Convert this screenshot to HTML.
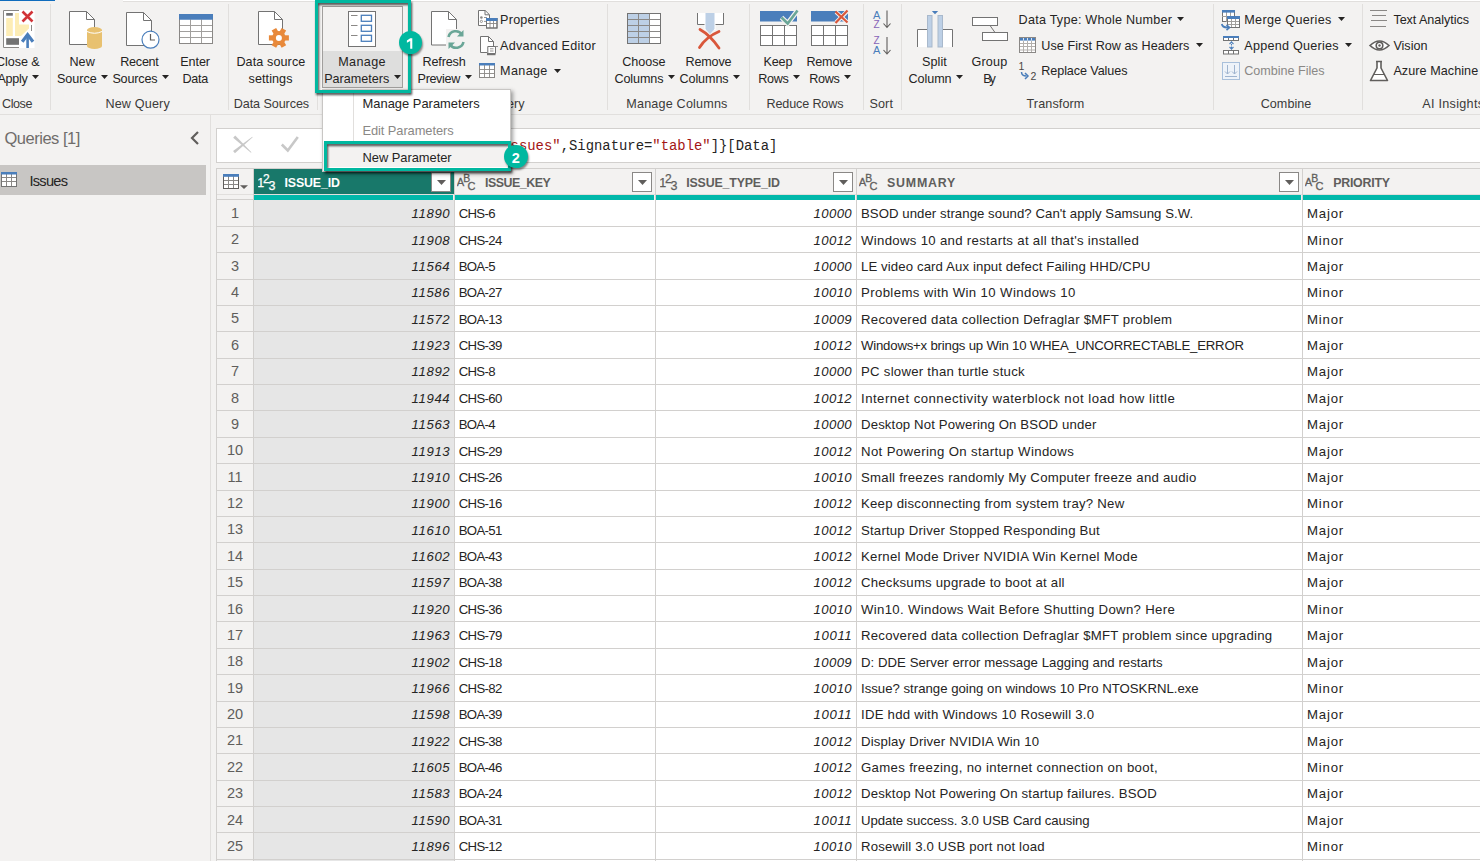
<!DOCTYPE html>
<html><head><meta charset="utf-8"><style>
html,body{margin:0;padding:0;}
body{width:1480px;height:861px;overflow:hidden;position:relative;background:#f3f2f1;font-family:"Liberation Sans",sans-serif;}
.t{position:absolute;white-space:nowrap;line-height:1;}
.r{position:absolute;}
</style></head><body>
<div class="r" style="left:0px;top:0px;width:55px;height:1px;background:#0f6cbd;"></div>
<div class="r" style="left:123px;top:0px;width:1357px;height:1px;background:#ffffff;"></div>
<div class="r" style="left:123px;top:1px;width:1357px;height:1px;background:#e1dfdd;"></div>
<div class="r" style="left:0px;top:114px;width:1480px;height:1px;background:#e1dfdd;"></div>
<div class="r" style="left:50px;top:4px;width:1px;height:106px;background:#e1dfdd;"></div>
<div class="r" style="left:228px;top:4px;width:1px;height:106px;background:#e1dfdd;"></div>
<div class="r" style="left:317px;top:4px;width:1px;height:106px;background:#e1dfdd;"></div>
<div class="r" style="left:607px;top:4px;width:1px;height:106px;background:#e1dfdd;"></div>
<div class="r" style="left:749px;top:4px;width:1px;height:106px;background:#e1dfdd;"></div>
<div class="r" style="left:863px;top:4px;width:1px;height:106px;background:#e1dfdd;"></div>
<div class="r" style="left:901px;top:4px;width:1px;height:106px;background:#e1dfdd;"></div>
<div class="r" style="left:1213px;top:4px;width:1px;height:106px;background:#e1dfdd;"></div>
<div class="r" style="left:1362px;top:4px;width:1px;height:106px;background:#e1dfdd;"></div>
<div class="r" style="left:322px;top:6px;width:81px;height:82px;background:#f3f2f1;border:1px solid #a19f9d;box-sizing:border-box;"></div>
<div class="r" style="left:323px;top:51px;width:79px;height:36px;background:#dededd;"></div>
<div class="t" style="left:-4.00px;top:55.73px;font-size:12.6px;color:#252423;font-weight:normal;font-style:normal;font-family:'Liberation Sans', sans-serif;letter-spacing:-0.067px;">Close &amp;</div>
<div class="t" style="left:-2.50px;top:72.73px;font-size:12.6px;color:#252423;font-weight:normal;font-style:normal;font-family:'Liberation Sans', sans-serif;letter-spacing:-0.275px;">Apply</div>
<svg class="r" style="left:32px;top:75px;" width="7" height="4" viewBox="0 0 7 4"><path d="M0 0H7L3.5 4Z" fill="#252423"/></svg>
<div class="t" style="left:69.40px;top:55.73px;font-size:12.6px;color:#252423;font-weight:normal;font-style:normal;font-family:'Liberation Sans', sans-serif;letter-spacing:0.119px;">New</div>
<div class="t" style="left:57.00px;top:72.73px;font-size:12.6px;color:#252423;font-weight:normal;font-style:normal;font-family:'Liberation Sans', sans-serif;letter-spacing:-0.028px;">Source</div>
<svg class="r" style="left:101px;top:75px;" width="7" height="4" viewBox="0 0 7 4"><path d="M0 0H7L3.5 4Z" fill="#252423"/></svg>
<div class="t" style="left:120.30px;top:55.73px;font-size:12.6px;color:#252423;font-weight:normal;font-style:normal;font-family:'Liberation Sans', sans-serif;letter-spacing:-0.268px;">Recent</div>
<div class="t" style="left:112.40px;top:72.73px;font-size:12.6px;color:#252423;font-weight:normal;font-style:normal;font-family:'Liberation Sans', sans-serif;letter-spacing:-0.174px;">Sources</div>
<svg class="r" style="left:162px;top:75px;" width="7" height="4" viewBox="0 0 7 4"><path d="M0 0H7L3.5 4Z" fill="#252423"/></svg>
<div class="t" style="left:180.30px;top:55.73px;font-size:12.6px;color:#252423;font-weight:normal;font-style:normal;font-family:'Liberation Sans', sans-serif;letter-spacing:-0.104px;">Enter</div>
<div class="t" style="left:182.40px;top:72.73px;font-size:12.6px;color:#252423;font-weight:normal;font-style:normal;font-family:'Liberation Sans', sans-serif;letter-spacing:-0.216px;">Data</div>
<div class="t" style="left:236.40px;top:55.73px;font-size:12.6px;color:#252423;font-weight:normal;font-style:normal;font-family:'Liberation Sans', sans-serif;letter-spacing:0.099px;">Data source</div>
<div class="t" style="left:248.60px;top:72.73px;font-size:12.6px;color:#252423;font-weight:normal;font-style:normal;font-family:'Liberation Sans', sans-serif;letter-spacing:0.070px;">settings</div>
<div class="t" style="left:338.20px;top:55.73px;font-size:12.6px;color:#252423;font-weight:normal;font-style:normal;font-family:'Liberation Sans', sans-serif;letter-spacing:0.370px;">Manage</div>
<div class="t" style="left:324.20px;top:72.73px;font-size:12.6px;color:#252423;font-weight:normal;font-style:normal;font-family:'Liberation Sans', sans-serif;letter-spacing:-0.005px;">Parameters</div>
<svg class="r" style="left:394px;top:75px;" width="7" height="4" viewBox="0 0 7 4"><path d="M0 0H7L3.5 4Z" fill="#252423"/></svg>
<div class="t" style="left:422.50px;top:55.73px;font-size:12.6px;color:#252423;font-weight:normal;font-style:normal;font-family:'Liberation Sans', sans-serif;letter-spacing:-0.150px;">Refresh</div>
<div class="t" style="left:417.60px;top:72.73px;font-size:12.6px;color:#252423;font-weight:normal;font-style:normal;font-family:'Liberation Sans', sans-serif;letter-spacing:-0.359px;">Preview</div>
<svg class="r" style="left:465px;top:75px;" width="7" height="4" viewBox="0 0 7 4"><path d="M0 0H7L3.5 4Z" fill="#252423"/></svg>
<div class="t" style="left:622.30px;top:55.73px;font-size:12.6px;color:#252423;font-weight:normal;font-style:normal;font-family:'Liberation Sans', sans-serif;letter-spacing:-0.061px;">Choose</div>
<div class="t" style="left:614.40px;top:72.73px;font-size:12.6px;color:#252423;font-weight:normal;font-style:normal;font-family:'Liberation Sans', sans-serif;letter-spacing:-0.084px;">Columns</div>
<svg class="r" style="left:668px;top:75px;" width="7" height="4" viewBox="0 0 7 4"><path d="M0 0H7L3.5 4Z" fill="#252423"/></svg>
<div class="t" style="left:685.50px;top:55.73px;font-size:12.6px;color:#252423;font-weight:normal;font-style:normal;font-family:'Liberation Sans', sans-serif;letter-spacing:-0.167px;">Remove</div>
<div class="t" style="left:679.50px;top:72.73px;font-size:12.6px;color:#252423;font-weight:normal;font-style:normal;font-family:'Liberation Sans', sans-serif;letter-spacing:-0.101px;">Columns</div>
<svg class="r" style="left:733px;top:75px;" width="7" height="4" viewBox="0 0 7 4"><path d="M0 0H7L3.5 4Z" fill="#252423"/></svg>
<div class="t" style="left:763.50px;top:55.73px;font-size:12.6px;color:#252423;font-weight:normal;font-style:normal;font-family:'Liberation Sans', sans-serif;letter-spacing:-0.140px;">Keep</div>
<div class="t" style="left:758.30px;top:72.73px;font-size:12.6px;color:#252423;font-weight:normal;font-style:normal;font-family:'Liberation Sans', sans-serif;letter-spacing:-0.333px;">Rows</div>
<svg class="r" style="left:793px;top:75px;" width="7" height="4" viewBox="0 0 7 4"><path d="M0 0H7L3.5 4Z" fill="#252423"/></svg>
<div class="t" style="left:806.40px;top:55.73px;font-size:12.6px;color:#252423;font-weight:normal;font-style:normal;font-family:'Liberation Sans', sans-serif;letter-spacing:-0.187px;">Remove</div>
<div class="t" style="left:809.30px;top:72.73px;font-size:12.6px;color:#252423;font-weight:normal;font-style:normal;font-family:'Liberation Sans', sans-serif;letter-spacing:-0.333px;">Rows</div>
<svg class="r" style="left:844px;top:75px;" width="7" height="4" viewBox="0 0 7 4"><path d="M0 0H7L3.5 4Z" fill="#252423"/></svg>
<div class="t" style="left:922.00px;top:55.73px;font-size:12.6px;color:#252423;font-weight:normal;font-style:normal;font-family:'Liberation Sans', sans-serif;letter-spacing:0.073px;">Split</div>
<div class="t" style="left:908.50px;top:72.73px;font-size:12.6px;color:#252423;font-weight:normal;font-style:normal;font-family:'Liberation Sans', sans-serif;letter-spacing:-0.061px;">Column</div>
<svg class="r" style="left:956px;top:75px;" width="7" height="4" viewBox="0 0 7 4"><path d="M0 0H7L3.5 4Z" fill="#252423"/></svg>
<div class="t" style="left:971.40px;top:55.73px;font-size:12.6px;color:#252423;font-weight:normal;font-style:normal;font-family:'Liberation Sans', sans-serif;letter-spacing:0.218px;">Group</div>
<div class="t" style="left:983.30px;top:72.73px;font-size:12.6px;color:#252423;font-weight:normal;font-style:normal;font-family:'Liberation Sans', sans-serif;letter-spacing:-2.079px;">By</div>
<div class="t" style="left:500.10px;top:14.03px;font-size:12.6px;color:#252423;font-weight:normal;font-style:normal;font-family:'Liberation Sans', sans-serif;letter-spacing:0.227px;">Properties</div>
<div class="t" style="left:500.10px;top:39.63px;font-size:12.6px;color:#252423;font-weight:normal;font-style:normal;font-family:'Liberation Sans', sans-serif;letter-spacing:0.223px;">Advanced Editor</div>
<div class="t" style="left:500.10px;top:65.23px;font-size:12.6px;color:#252423;font-weight:normal;font-style:normal;font-family:'Liberation Sans', sans-serif;letter-spacing:0.350px;">Manage</div>
<svg class="r" style="left:554px;top:68.5px;" width="7" height="4" viewBox="0 0 7 4"><path d="M0 0H7L3.5 4Z" fill="#252423"/></svg>
<div class="t" style="left:1018.60px;top:14.03px;font-size:12.6px;color:#252423;font-weight:normal;font-style:normal;font-family:'Liberation Sans', sans-serif;letter-spacing:0.235px;">Data Type: Whole Number</div>
<svg class="r" style="left:1177px;top:17.3px;" width="7" height="4" viewBox="0 0 7 4"><path d="M0 0H7L3.5 4Z" fill="#252423"/></svg>
<div class="t" style="left:1041.30px;top:39.63px;font-size:12.6px;color:#252423;font-weight:normal;font-style:normal;font-family:'Liberation Sans', sans-serif;letter-spacing:0.050px;">Use First Row as Headers</div>
<svg class="r" style="left:1196px;top:42.9px;" width="7" height="4" viewBox="0 0 7 4"><path d="M0 0H7L3.5 4Z" fill="#252423"/></svg>
<div class="t" style="left:1041.30px;top:65.23px;font-size:12.6px;color:#252423;font-weight:normal;font-style:normal;font-family:'Liberation Sans', sans-serif;letter-spacing:-0.086px;">Replace Values</div>
<div class="t" style="left:1244.30px;top:14.03px;font-size:12.6px;color:#252423;font-weight:normal;font-style:normal;font-family:'Liberation Sans', sans-serif;letter-spacing:0.304px;">Merge Queries</div>
<svg class="r" style="left:1338px;top:17.3px;" width="7" height="4" viewBox="0 0 7 4"><path d="M0 0H7L3.5 4Z" fill="#252423"/></svg>
<div class="t" style="left:1244.30px;top:39.63px;font-size:12.6px;color:#252423;font-weight:normal;font-style:normal;font-family:'Liberation Sans', sans-serif;letter-spacing:0.251px;">Append Queries</div>
<svg class="r" style="left:1345px;top:42.9px;" width="7" height="4" viewBox="0 0 7 4"><path d="M0 0H7L3.5 4Z" fill="#252423"/></svg>
<div class="t" style="left:1244.30px;top:65.23px;font-size:12.6px;color:#8a8886;font-weight:normal;font-style:normal;font-family:'Liberation Sans', sans-serif;letter-spacing:-0.018px;">Combine Files</div>
<div class="t" style="left:1393.40px;top:14.03px;font-size:12.6px;color:#252423;font-weight:normal;font-style:normal;font-family:'Liberation Sans', sans-serif;letter-spacing:-0.058px;">Text Analytics</div>
<div class="t" style="left:1393.40px;top:39.63px;font-size:12.6px;color:#252423;font-weight:normal;font-style:normal;font-family:'Liberation Sans', sans-serif;letter-spacing:0.003px;">Vision</div>
<div class="t" style="left:1393.40px;top:65.23px;font-size:12.6px;color:#252423;font-weight:normal;font-style:normal;font-family:'Liberation Sans', sans-serif;letter-spacing:0.063px;">Azure Machine Learning</div>
<div class="t" style="left:2.00px;top:97.53px;font-size:12.6px;color:#3b3a39;font-weight:normal;font-style:normal;font-family:'Liberation Sans', sans-serif;letter-spacing:-0.448px;">Close</div>
<div class="t" style="left:105.40px;top:97.53px;font-size:12.6px;color:#3b3a39;font-weight:normal;font-style:normal;font-family:'Liberation Sans', sans-serif;letter-spacing:0.175px;">New Query</div>
<div class="t" style="left:233.70px;top:97.53px;font-size:12.6px;color:#3b3a39;font-weight:normal;font-style:normal;font-family:'Liberation Sans', sans-serif;letter-spacing:-0.078px;">Data Sources</div>
<div class="t" style="left:626.30px;top:97.53px;font-size:12.6px;color:#3b3a39;font-weight:normal;font-style:normal;font-family:'Liberation Sans', sans-serif;letter-spacing:0.186px;">Manage Columns</div>
<div class="t" style="left:766.50px;top:97.53px;font-size:12.6px;color:#3b3a39;font-weight:normal;font-style:normal;font-family:'Liberation Sans', sans-serif;letter-spacing:-0.144px;">Reduce Rows</div>
<div class="t" style="left:869.50px;top:97.53px;font-size:12.6px;color:#3b3a39;font-weight:normal;font-style:normal;font-family:'Liberation Sans', sans-serif;letter-spacing:0.093px;">Sort</div>
<div class="t" style="left:1026.50px;top:97.53px;font-size:12.6px;color:#3b3a39;font-weight:normal;font-style:normal;font-family:'Liberation Sans', sans-serif;letter-spacing:0.119px;">Transform</div>
<div class="t" style="left:1260.70px;top:97.53px;font-size:12.6px;color:#3b3a39;font-weight:normal;font-style:normal;font-family:'Liberation Sans', sans-serif;letter-spacing:0.033px;">Combine</div>
<div class="t" style="left:490.20px;top:97.53px;font-size:12.6px;color:#3b3a39;font-weight:normal;font-style:normal;font-family:'Liberation Sans', sans-serif;letter-spacing:0.041px;">Query</div>
<div class="t" style="left:1422.20px;top:97.53px;font-size:12.6px;color:#3b3a39;font-weight:normal;font-style:normal;font-family:'Liberation Sans', sans-serif;letter-spacing:0.3px;">AI Insights</div>
<div class="r" style="left:210px;top:115px;width:1px;height:746px;background:#e1dfdd;"></div>
<div class="t" style="left:4.50px;top:129.73px;font-size:16.5px;color:#6f6d6b;font-weight:normal;font-style:normal;font-family:'Liberation Sans', sans-serif;letter-spacing:-0.489px;">Queries [1]</div>
<svg class="r" style="left:188px;top:130px;" width="14" height="16" viewBox="0 0 14 16"><path d="M10 2L4 8L10 14" fill="none" stroke="#605e5c" stroke-width="2.2"/></svg>
<div class="r" style="left:0px;top:165px;width:206px;height:30px;background:#c8c6c4;"></div>
<div class="t" style="left:29.40px;top:173.84px;font-size:14.6px;color:#252423;font-weight:normal;font-style:normal;font-family:'Liberation Sans', sans-serif;letter-spacing:-0.699px;">Issues</div>
<svg class="r" style="left:0px;top:171px;" width="19" height="17" viewBox="0 0 19 17"><rect x="1.5" y="1.5" width="15" height="14" fill="#fff" stroke="#737373"/><path d="M1 6.5H17M1 10.5H17M6.5 3V16M11.5 3V16" stroke="#8a8886" stroke-width="1"/><rect x="1.5" y="1.5" width="15" height="14" fill="none" stroke="#737373"/><rect x="1" y="1" width="16" height="2.5" fill="#4a7ebb"/></svg>
<div class="r" style="left:216px;top:128px;width:1280px;height:35px;background:#ffffff;border:1px solid #d2d0ce;box-sizing:border-box;"></div>
<svg class="r" style="left:232px;top:135px;" width="22" height="19" viewBox="0 0 22 19"><path d="M1.17 2.69L18.96 17.85L19.44 17.35L3.23 0.51Z" fill="#c8c8c8"/><path d="M2.95 18.36L20.69 2.23L20.31 1.77L1.05 16.04Z" fill="#c8c8c8"/></svg>
<svg class="r" style="left:280px;top:135px;" width="20" height="18" viewBox="0 0 20 18"><path d="M1.8 9.5L7.8 15.5L17.8 2" stroke="#c8c8c8" stroke-width="2.6" fill="none"/></svg>
<div class="t" style="left:368.90px;top:139.53px;font-size:13.9px;color:#252423;font-weight:normal;font-style:normal;font-family:'Liberation Mono', monospace;">= Source{[Name=<span style="color:#a31515">"Issues"</span>,Signature=<span style="color:#a31515">"table"</span>]}[Data]</div>
<div class="r" style="left:216px;top:168px;width:1264px;height:693px;background:#ffffff;"></div>
<div class="r" style="left:216px;top:168px;width:1264px;height:1px;background:#d2d0ce;"></div>
<div class="r" style="left:216px;top:168px;width:1px;height:693px;background:#d2d0ce;"></div>
<div class="r" style="left:217px;top:169px;width:1263px;height:25px;background:#f3f2f1;"></div>
<div class="r" style="left:217px;top:194px;width:1263px;height:1px;background:#e1dfdd;"></div>
<div class="r" style="left:217px;top:195px;width:1263px;height:5px;background:#f3f2f1;"></div>
<div class="r" style="left:254px;top:169px;width:200px;height:25px;background:#18786a;"></div>
<div class="r" style="left:254px;top:195px;width:199px;height:5px;background:#01b8aa;"></div>
<div class="r" style="left:455px;top:195px;width:199px;height:5px;background:#01b8aa;"></div>
<div class="r" style="left:656px;top:195px;width:199px;height:5px;background:#01b8aa;"></div>
<div class="r" style="left:857px;top:195px;width:444px;height:5px;background:#01b8aa;"></div>
<div class="r" style="left:1303px;top:195px;width:177px;height:5px;background:#01b8aa;"></div>
<div class="r" style="left:217px;top:200px;width:36px;height:661px;background:#f3f2f1;"></div>
<div class="r" style="left:254px;top:200px;width:200px;height:661px;background:#e6e6e6;"></div>
<div class="r" style="left:253px;top:169px;width:1px;height:692px;background:#d2d0ce;"></div>
<div class="r" style="left:454px;top:169px;width:1px;height:692px;background:#d2d0ce;"></div>
<div class="r" style="left:655px;top:169px;width:1px;height:692px;background:#d2d0ce;"></div>
<div class="r" style="left:856px;top:169px;width:1px;height:692px;background:#d2d0ce;"></div>
<div class="r" style="left:1302px;top:169px;width:1px;height:692px;background:#d2d0ce;"></div>
<div class="r" style="left:217px;top:199px;width:36px;height:1px;background:#d2d0ce;"></div>
<div class="t" style="left:-65.00px;width:600px;text-align:center;top:205.93px;font-size:14.5px;color:#605e5c;font-weight:normal;font-style:normal;font-family:'Liberation Sans', sans-serif;">1</div>
<div class="t" style="left:411.60px;top:207.23px;font-size:13.2px;color:#252423;font-weight:normal;font-style:italic;font-family:'Liberation Sans', sans-serif;letter-spacing:0.599px;">11890</div>
<div class="t" style="left:458.70px;top:207.23px;font-size:13.2px;color:#252423;font-weight:normal;font-style:normal;font-family:'Liberation Sans', sans-serif;letter-spacing:-0.693px;">CHS-6</div>
<div class="t" style="left:813.60px;top:207.23px;font-size:13.2px;color:#252423;font-weight:normal;font-style:italic;font-family:'Liberation Sans', sans-serif;letter-spacing:0.351px;">10000</div>
<div class="t" style="left:861.00px;top:207.23px;font-size:13.2px;color:#252423;font-weight:normal;font-style:normal;font-family:'Liberation Sans', sans-serif;letter-spacing:0.055px;">BSOD under strange sound? Can't apply Samsung S.W.</div>
<div class="t" style="left:1307.00px;top:207.23px;font-size:13.2px;color:#252423;font-weight:normal;font-style:normal;font-family:'Liberation Sans', sans-serif;letter-spacing:0.800px;">Major</div>
<div class="r" style="left:217px;top:226px;width:1263px;height:1px;background:#d2d0ce;"></div>
<div class="t" style="left:-65.00px;width:600px;text-align:center;top:232.30px;font-size:14.5px;color:#605e5c;font-weight:normal;font-style:normal;font-family:'Liberation Sans', sans-serif;">2</div>
<div class="t" style="left:411.60px;top:233.60px;font-size:13.2px;color:#252423;font-weight:normal;font-style:italic;font-family:'Liberation Sans', sans-serif;letter-spacing:0.599px;">11908</div>
<div class="t" style="left:458.70px;top:233.60px;font-size:13.2px;color:#252423;font-weight:normal;font-style:normal;font-family:'Liberation Sans', sans-serif;letter-spacing:-0.657px;">CHS-24</div>
<div class="t" style="left:813.60px;top:233.60px;font-size:13.2px;color:#252423;font-weight:normal;font-style:italic;font-family:'Liberation Sans', sans-serif;letter-spacing:0.351px;">10012</div>
<div class="t" style="left:861.00px;top:233.60px;font-size:13.2px;color:#252423;font-weight:normal;font-style:normal;font-family:'Liberation Sans', sans-serif;letter-spacing:0.310px;">Windows 10 and restarts at all that's installed</div>
<div class="t" style="left:1307.00px;top:233.60px;font-size:13.2px;color:#252423;font-weight:normal;font-style:normal;font-family:'Liberation Sans', sans-serif;letter-spacing:0.800px;">Minor</div>
<div class="r" style="left:217px;top:252px;width:1263px;height:1px;background:#d2d0ce;"></div>
<div class="t" style="left:-65.00px;width:600px;text-align:center;top:258.68px;font-size:14.5px;color:#605e5c;font-weight:normal;font-style:normal;font-family:'Liberation Sans', sans-serif;">3</div>
<div class="t" style="left:411.60px;top:259.98px;font-size:13.2px;color:#252423;font-weight:normal;font-style:italic;font-family:'Liberation Sans', sans-serif;letter-spacing:0.599px;">11564</div>
<div class="t" style="left:458.70px;top:259.98px;font-size:13.2px;color:#252423;font-weight:normal;font-style:normal;font-family:'Liberation Sans', sans-serif;letter-spacing:-0.693px;">BOA-5</div>
<div class="t" style="left:813.60px;top:259.98px;font-size:13.2px;color:#252423;font-weight:normal;font-style:italic;font-family:'Liberation Sans', sans-serif;letter-spacing:0.351px;">10000</div>
<div class="t" style="left:861.00px;top:259.98px;font-size:13.2px;color:#252423;font-weight:normal;font-style:normal;font-family:'Liberation Sans', sans-serif;letter-spacing:0.110px;">LE video card Aux input defect Failing HHD/CPU</div>
<div class="t" style="left:1307.00px;top:259.98px;font-size:13.2px;color:#252423;font-weight:normal;font-style:normal;font-family:'Liberation Sans', sans-serif;letter-spacing:0.800px;">Major</div>
<div class="r" style="left:217px;top:279px;width:1263px;height:1px;background:#d2d0ce;"></div>
<div class="t" style="left:-65.00px;width:600px;text-align:center;top:285.05px;font-size:14.5px;color:#605e5c;font-weight:normal;font-style:normal;font-family:'Liberation Sans', sans-serif;">4</div>
<div class="t" style="left:411.60px;top:286.35px;font-size:13.2px;color:#252423;font-weight:normal;font-style:italic;font-family:'Liberation Sans', sans-serif;letter-spacing:0.582px;">11586</div>
<div class="t" style="left:458.70px;top:286.35px;font-size:13.2px;color:#252423;font-weight:normal;font-style:normal;font-family:'Liberation Sans', sans-serif;letter-spacing:-0.657px;">BOA-27</div>
<div class="t" style="left:813.60px;top:286.35px;font-size:13.2px;color:#252423;font-weight:normal;font-style:italic;font-family:'Liberation Sans', sans-serif;letter-spacing:0.351px;">10010</div>
<div class="t" style="left:861.00px;top:286.35px;font-size:13.2px;color:#252423;font-weight:normal;font-style:normal;font-family:'Liberation Sans', sans-serif;letter-spacing:0.376px;">Problems with Win 10 Windows 10</div>
<div class="t" style="left:1307.00px;top:286.35px;font-size:13.2px;color:#252423;font-weight:normal;font-style:normal;font-family:'Liberation Sans', sans-serif;letter-spacing:0.800px;">Minor</div>
<div class="r" style="left:217px;top:305px;width:1263px;height:1px;background:#d2d0ce;"></div>
<div class="t" style="left:-65.00px;width:600px;text-align:center;top:311.43px;font-size:14.5px;color:#605e5c;font-weight:normal;font-style:normal;font-family:'Liberation Sans', sans-serif;">5</div>
<div class="t" style="left:411.60px;top:312.73px;font-size:13.2px;color:#252423;font-weight:normal;font-style:italic;font-family:'Liberation Sans', sans-serif;letter-spacing:0.599px;">11572</div>
<div class="t" style="left:458.70px;top:312.73px;font-size:13.2px;color:#252423;font-weight:normal;font-style:normal;font-family:'Liberation Sans', sans-serif;letter-spacing:-0.657px;">BOA-13</div>
<div class="t" style="left:813.60px;top:312.73px;font-size:13.2px;color:#252423;font-weight:normal;font-style:italic;font-family:'Liberation Sans', sans-serif;letter-spacing:0.351px;">10009</div>
<div class="t" style="left:861.00px;top:312.73px;font-size:13.2px;color:#252423;font-weight:normal;font-style:normal;font-family:'Liberation Sans', sans-serif;letter-spacing:0.261px;">Recovered data collection Defraglar $MFT problem</div>
<div class="t" style="left:1307.00px;top:312.73px;font-size:13.2px;color:#252423;font-weight:normal;font-style:normal;font-family:'Liberation Sans', sans-serif;letter-spacing:0.800px;">Minor</div>
<div class="r" style="left:217px;top:331px;width:1263px;height:1px;background:#d2d0ce;"></div>
<div class="t" style="left:-65.00px;width:600px;text-align:center;top:337.80px;font-size:14.5px;color:#605e5c;font-weight:normal;font-style:normal;font-family:'Liberation Sans', sans-serif;">6</div>
<div class="t" style="left:411.60px;top:339.10px;font-size:13.2px;color:#252423;font-weight:normal;font-style:italic;font-family:'Liberation Sans', sans-serif;letter-spacing:0.599px;">11923</div>
<div class="t" style="left:458.70px;top:339.10px;font-size:13.2px;color:#252423;font-weight:normal;font-style:normal;font-family:'Liberation Sans', sans-serif;letter-spacing:-0.657px;">CHS-39</div>
<div class="t" style="left:813.60px;top:339.10px;font-size:13.2px;color:#252423;font-weight:normal;font-style:italic;font-family:'Liberation Sans', sans-serif;letter-spacing:0.351px;">10012</div>
<div class="t" style="left:861.00px;top:339.10px;font-size:13.2px;color:#252423;font-weight:normal;font-style:normal;font-family:'Liberation Sans', sans-serif;letter-spacing:-0.198px;">Windows+x brings up Win 10 WHEA_UNCORRECTABLE_ERROR</div>
<div class="t" style="left:1307.00px;top:339.10px;font-size:13.2px;color:#252423;font-weight:normal;font-style:normal;font-family:'Liberation Sans', sans-serif;letter-spacing:0.800px;">Major</div>
<div class="r" style="left:217px;top:358px;width:1263px;height:1px;background:#d2d0ce;"></div>
<div class="t" style="left:-65.00px;width:600px;text-align:center;top:364.18px;font-size:14.5px;color:#605e5c;font-weight:normal;font-style:normal;font-family:'Liberation Sans', sans-serif;">7</div>
<div class="t" style="left:411.60px;top:365.48px;font-size:13.2px;color:#252423;font-weight:normal;font-style:italic;font-family:'Liberation Sans', sans-serif;letter-spacing:0.599px;">11892</div>
<div class="t" style="left:458.70px;top:365.48px;font-size:13.2px;color:#252423;font-weight:normal;font-style:normal;font-family:'Liberation Sans', sans-serif;letter-spacing:-0.693px;">CHS-8</div>
<div class="t" style="left:813.60px;top:365.48px;font-size:13.2px;color:#252423;font-weight:normal;font-style:italic;font-family:'Liberation Sans', sans-serif;letter-spacing:0.351px;">10000</div>
<div class="t" style="left:861.00px;top:365.48px;font-size:13.2px;color:#252423;font-weight:normal;font-style:normal;font-family:'Liberation Sans', sans-serif;letter-spacing:0.262px;">PC slower than turtle stuck</div>
<div class="t" style="left:1307.00px;top:365.48px;font-size:13.2px;color:#252423;font-weight:normal;font-style:normal;font-family:'Liberation Sans', sans-serif;letter-spacing:0.800px;">Major</div>
<div class="r" style="left:217px;top:384px;width:1263px;height:1px;background:#d2d0ce;"></div>
<div class="t" style="left:-65.00px;width:600px;text-align:center;top:390.55px;font-size:14.5px;color:#605e5c;font-weight:normal;font-style:normal;font-family:'Liberation Sans', sans-serif;">8</div>
<div class="t" style="left:411.60px;top:391.85px;font-size:13.2px;color:#252423;font-weight:normal;font-style:italic;font-family:'Liberation Sans', sans-serif;letter-spacing:0.599px;">11944</div>
<div class="t" style="left:458.70px;top:391.85px;font-size:13.2px;color:#252423;font-weight:normal;font-style:normal;font-family:'Liberation Sans', sans-serif;letter-spacing:-0.657px;">CHS-60</div>
<div class="t" style="left:813.60px;top:391.85px;font-size:13.2px;color:#252423;font-weight:normal;font-style:italic;font-family:'Liberation Sans', sans-serif;letter-spacing:0.351px;">10012</div>
<div class="t" style="left:861.00px;top:391.85px;font-size:13.2px;color:#252423;font-weight:normal;font-style:normal;font-family:'Liberation Sans', sans-serif;letter-spacing:0.476px;">Internet connectivity waterblock not load how little</div>
<div class="t" style="left:1307.00px;top:391.85px;font-size:13.2px;color:#252423;font-weight:normal;font-style:normal;font-family:'Liberation Sans', sans-serif;letter-spacing:0.800px;">Major</div>
<div class="r" style="left:217px;top:410px;width:1263px;height:1px;background:#d2d0ce;"></div>
<div class="t" style="left:-65.00px;width:600px;text-align:center;top:416.93px;font-size:14.5px;color:#605e5c;font-weight:normal;font-style:normal;font-family:'Liberation Sans', sans-serif;">9</div>
<div class="t" style="left:411.60px;top:418.23px;font-size:13.2px;color:#252423;font-weight:normal;font-style:italic;font-family:'Liberation Sans', sans-serif;letter-spacing:0.599px;">11563</div>
<div class="t" style="left:458.70px;top:418.23px;font-size:13.2px;color:#252423;font-weight:normal;font-style:normal;font-family:'Liberation Sans', sans-serif;letter-spacing:-0.693px;">BOA-4</div>
<div class="t" style="left:813.60px;top:418.23px;font-size:13.2px;color:#252423;font-weight:normal;font-style:italic;font-family:'Liberation Sans', sans-serif;letter-spacing:0.351px;">10000</div>
<div class="t" style="left:861.00px;top:418.23px;font-size:13.2px;color:#252423;font-weight:normal;font-style:normal;font-family:'Liberation Sans', sans-serif;letter-spacing:0.135px;">Desktop Not Powering On BSOD under</div>
<div class="t" style="left:1307.00px;top:418.23px;font-size:13.2px;color:#252423;font-weight:normal;font-style:normal;font-family:'Liberation Sans', sans-serif;letter-spacing:0.800px;">Major</div>
<div class="r" style="left:217px;top:437px;width:1263px;height:1px;background:#d2d0ce;"></div>
<div class="t" style="left:-65.00px;width:600px;text-align:center;top:443.30px;font-size:14.5px;color:#605e5c;font-weight:normal;font-style:normal;font-family:'Liberation Sans', sans-serif;">10</div>
<div class="t" style="left:411.60px;top:444.60px;font-size:13.2px;color:#252423;font-weight:normal;font-style:italic;font-family:'Liberation Sans', sans-serif;letter-spacing:0.599px;">11913</div>
<div class="t" style="left:458.70px;top:444.60px;font-size:13.2px;color:#252423;font-weight:normal;font-style:normal;font-family:'Liberation Sans', sans-serif;letter-spacing:-0.657px;">CHS-29</div>
<div class="t" style="left:813.60px;top:444.60px;font-size:13.2px;color:#252423;font-weight:normal;font-style:italic;font-family:'Liberation Sans', sans-serif;letter-spacing:0.351px;">10012</div>
<div class="t" style="left:861.00px;top:444.60px;font-size:13.2px;color:#252423;font-weight:normal;font-style:normal;font-family:'Liberation Sans', sans-serif;letter-spacing:0.375px;">Not Powering On startup Windows</div>
<div class="t" style="left:1307.00px;top:444.60px;font-size:13.2px;color:#252423;font-weight:normal;font-style:normal;font-family:'Liberation Sans', sans-serif;letter-spacing:0.800px;">Major</div>
<div class="r" style="left:217px;top:463px;width:1263px;height:1px;background:#d2d0ce;"></div>
<div class="t" style="left:-65.00px;width:600px;text-align:center;top:469.68px;font-size:14.5px;color:#605e5c;font-weight:normal;font-style:normal;font-family:'Liberation Sans', sans-serif;">11</div>
<div class="t" style="left:411.60px;top:470.98px;font-size:13.2px;color:#252423;font-weight:normal;font-style:italic;font-family:'Liberation Sans', sans-serif;letter-spacing:0.599px;">11910</div>
<div class="t" style="left:458.70px;top:470.98px;font-size:13.2px;color:#252423;font-weight:normal;font-style:normal;font-family:'Liberation Sans', sans-serif;letter-spacing:-0.657px;">CHS-26</div>
<div class="t" style="left:813.60px;top:470.98px;font-size:13.2px;color:#252423;font-weight:normal;font-style:italic;font-family:'Liberation Sans', sans-serif;letter-spacing:0.351px;">10010</div>
<div class="t" style="left:861.00px;top:470.98px;font-size:13.2px;color:#252423;font-weight:normal;font-style:normal;font-family:'Liberation Sans', sans-serif;letter-spacing:0.256px;">Small freezes randomly My Computer freeze and audio</div>
<div class="t" style="left:1307.00px;top:470.98px;font-size:13.2px;color:#252423;font-weight:normal;font-style:normal;font-family:'Liberation Sans', sans-serif;letter-spacing:0.800px;">Major</div>
<div class="r" style="left:217px;top:490px;width:1263px;height:1px;background:#d2d0ce;"></div>
<div class="t" style="left:-65.00px;width:600px;text-align:center;top:496.05px;font-size:14.5px;color:#605e5c;font-weight:normal;font-style:normal;font-family:'Liberation Sans', sans-serif;">12</div>
<div class="t" style="left:411.60px;top:497.35px;font-size:13.2px;color:#252423;font-weight:normal;font-style:italic;font-family:'Liberation Sans', sans-serif;letter-spacing:0.599px;">11900</div>
<div class="t" style="left:458.70px;top:497.35px;font-size:13.2px;color:#252423;font-weight:normal;font-style:normal;font-family:'Liberation Sans', sans-serif;letter-spacing:-0.657px;">CHS-16</div>
<div class="t" style="left:813.60px;top:497.35px;font-size:13.2px;color:#252423;font-weight:normal;font-style:italic;font-family:'Liberation Sans', sans-serif;letter-spacing:0.351px;">10012</div>
<div class="t" style="left:861.00px;top:497.35px;font-size:13.2px;color:#252423;font-weight:normal;font-style:normal;font-family:'Liberation Sans', sans-serif;letter-spacing:0.246px;">Keep disconnecting from system tray? New</div>
<div class="t" style="left:1307.00px;top:497.35px;font-size:13.2px;color:#252423;font-weight:normal;font-style:normal;font-family:'Liberation Sans', sans-serif;letter-spacing:0.800px;">Minor</div>
<div class="r" style="left:217px;top:516px;width:1263px;height:1px;background:#d2d0ce;"></div>
<div class="t" style="left:-65.00px;width:600px;text-align:center;top:522.43px;font-size:14.5px;color:#605e5c;font-weight:normal;font-style:normal;font-family:'Liberation Sans', sans-serif;">13</div>
<div class="t" style="left:411.60px;top:523.73px;font-size:13.2px;color:#252423;font-weight:normal;font-style:italic;font-family:'Liberation Sans', sans-serif;letter-spacing:0.599px;">11610</div>
<div class="t" style="left:458.70px;top:523.73px;font-size:13.2px;color:#252423;font-weight:normal;font-style:normal;font-family:'Liberation Sans', sans-serif;letter-spacing:-0.657px;">BOA-51</div>
<div class="t" style="left:813.60px;top:523.73px;font-size:13.2px;color:#252423;font-weight:normal;font-style:italic;font-family:'Liberation Sans', sans-serif;letter-spacing:0.351px;">10012</div>
<div class="t" style="left:861.00px;top:523.73px;font-size:13.2px;color:#252423;font-weight:normal;font-style:normal;font-family:'Liberation Sans', sans-serif;letter-spacing:0.196px;">Startup Driver Stopped Responding But</div>
<div class="t" style="left:1307.00px;top:523.73px;font-size:13.2px;color:#252423;font-weight:normal;font-style:normal;font-family:'Liberation Sans', sans-serif;letter-spacing:0.800px;">Major</div>
<div class="r" style="left:217px;top:542px;width:1263px;height:1px;background:#d2d0ce;"></div>
<div class="t" style="left:-65.00px;width:600px;text-align:center;top:548.80px;font-size:14.5px;color:#605e5c;font-weight:normal;font-style:normal;font-family:'Liberation Sans', sans-serif;">14</div>
<div class="t" style="left:411.60px;top:550.10px;font-size:13.2px;color:#252423;font-weight:normal;font-style:italic;font-family:'Liberation Sans', sans-serif;letter-spacing:0.599px;">11602</div>
<div class="t" style="left:458.70px;top:550.10px;font-size:13.2px;color:#252423;font-weight:normal;font-style:normal;font-family:'Liberation Sans', sans-serif;letter-spacing:-0.657px;">BOA-43</div>
<div class="t" style="left:813.60px;top:550.10px;font-size:13.2px;color:#252423;font-weight:normal;font-style:italic;font-family:'Liberation Sans', sans-serif;letter-spacing:0.351px;">10012</div>
<div class="t" style="left:861.00px;top:550.10px;font-size:13.2px;color:#252423;font-weight:normal;font-style:normal;font-family:'Liberation Sans', sans-serif;letter-spacing:0.280px;">Kernel Mode Driver NVIDIA Win Kernel Mode</div>
<div class="t" style="left:1307.00px;top:550.10px;font-size:13.2px;color:#252423;font-weight:normal;font-style:normal;font-family:'Liberation Sans', sans-serif;letter-spacing:0.800px;">Major</div>
<div class="r" style="left:217px;top:569px;width:1263px;height:1px;background:#d2d0ce;"></div>
<div class="t" style="left:-65.00px;width:600px;text-align:center;top:575.18px;font-size:14.5px;color:#605e5c;font-weight:normal;font-style:normal;font-family:'Liberation Sans', sans-serif;">15</div>
<div class="t" style="left:411.60px;top:576.48px;font-size:13.2px;color:#252423;font-weight:normal;font-style:italic;font-family:'Liberation Sans', sans-serif;letter-spacing:0.483px;">11597</div>
<div class="t" style="left:458.70px;top:576.48px;font-size:13.2px;color:#252423;font-weight:normal;font-style:normal;font-family:'Liberation Sans', sans-serif;letter-spacing:-0.657px;">BOA-38</div>
<div class="t" style="left:813.60px;top:576.48px;font-size:13.2px;color:#252423;font-weight:normal;font-style:italic;font-family:'Liberation Sans', sans-serif;letter-spacing:0.351px;">10012</div>
<div class="t" style="left:861.00px;top:576.48px;font-size:13.2px;color:#252423;font-weight:normal;font-style:normal;font-family:'Liberation Sans', sans-serif;letter-spacing:0.226px;">Checksums upgrade to boot at all</div>
<div class="t" style="left:1307.00px;top:576.48px;font-size:13.2px;color:#252423;font-weight:normal;font-style:normal;font-family:'Liberation Sans', sans-serif;letter-spacing:0.800px;">Major</div>
<div class="r" style="left:217px;top:595px;width:1263px;height:1px;background:#d2d0ce;"></div>
<div class="t" style="left:-65.00px;width:600px;text-align:center;top:601.55px;font-size:14.5px;color:#605e5c;font-weight:normal;font-style:normal;font-family:'Liberation Sans', sans-serif;">16</div>
<div class="t" style="left:411.60px;top:602.85px;font-size:13.2px;color:#252423;font-weight:normal;font-style:italic;font-family:'Liberation Sans', sans-serif;letter-spacing:0.599px;">11920</div>
<div class="t" style="left:458.70px;top:602.85px;font-size:13.2px;color:#252423;font-weight:normal;font-style:normal;font-family:'Liberation Sans', sans-serif;letter-spacing:-0.657px;">CHS-36</div>
<div class="t" style="left:813.60px;top:602.85px;font-size:13.2px;color:#252423;font-weight:normal;font-style:italic;font-family:'Liberation Sans', sans-serif;letter-spacing:0.351px;">10010</div>
<div class="t" style="left:861.00px;top:602.85px;font-size:13.2px;color:#252423;font-weight:normal;font-style:normal;font-family:'Liberation Sans', sans-serif;letter-spacing:0.321px;">Win10. Windows Wait Before Shutting Down? Here</div>
<div class="t" style="left:1307.00px;top:602.85px;font-size:13.2px;color:#252423;font-weight:normal;font-style:normal;font-family:'Liberation Sans', sans-serif;letter-spacing:0.800px;">Minor</div>
<div class="r" style="left:217px;top:621px;width:1263px;height:1px;background:#d2d0ce;"></div>
<div class="t" style="left:-65.00px;width:600px;text-align:center;top:627.93px;font-size:14.5px;color:#605e5c;font-weight:normal;font-style:normal;font-family:'Liberation Sans', sans-serif;">17</div>
<div class="t" style="left:411.60px;top:629.23px;font-size:13.2px;color:#252423;font-weight:normal;font-style:italic;font-family:'Liberation Sans', sans-serif;letter-spacing:0.599px;">11963</div>
<div class="t" style="left:458.70px;top:629.23px;font-size:13.2px;color:#252423;font-weight:normal;font-style:normal;font-family:'Liberation Sans', sans-serif;letter-spacing:-0.657px;">CHS-79</div>
<div class="t" style="left:813.60px;top:629.23px;font-size:13.2px;color:#252423;font-weight:normal;font-style:italic;font-family:'Liberation Sans', sans-serif;letter-spacing:0.599px;">10011</div>
<div class="t" style="left:861.00px;top:629.23px;font-size:13.2px;color:#252423;font-weight:normal;font-style:normal;font-family:'Liberation Sans', sans-serif;letter-spacing:0.246px;">Recovered data collection Defraglar $MFT problem since upgrading</div>
<div class="t" style="left:1307.00px;top:629.23px;font-size:13.2px;color:#252423;font-weight:normal;font-style:normal;font-family:'Liberation Sans', sans-serif;letter-spacing:0.800px;">Major</div>
<div class="r" style="left:217px;top:648px;width:1263px;height:1px;background:#d2d0ce;"></div>
<div class="t" style="left:-65.00px;width:600px;text-align:center;top:654.30px;font-size:14.5px;color:#605e5c;font-weight:normal;font-style:normal;font-family:'Liberation Sans', sans-serif;">18</div>
<div class="t" style="left:411.60px;top:655.60px;font-size:13.2px;color:#252423;font-weight:normal;font-style:italic;font-family:'Liberation Sans', sans-serif;letter-spacing:0.599px;">11902</div>
<div class="t" style="left:458.70px;top:655.60px;font-size:13.2px;color:#252423;font-weight:normal;font-style:normal;font-family:'Liberation Sans', sans-serif;letter-spacing:-0.657px;">CHS-18</div>
<div class="t" style="left:813.60px;top:655.60px;font-size:13.2px;color:#252423;font-weight:normal;font-style:italic;font-family:'Liberation Sans', sans-serif;letter-spacing:0.351px;">10009</div>
<div class="t" style="left:861.00px;top:655.60px;font-size:13.2px;color:#252423;font-weight:normal;font-style:normal;font-family:'Liberation Sans', sans-serif;letter-spacing:0.040px;">D: DDE Server error message Lagging and restarts</div>
<div class="t" style="left:1307.00px;top:655.60px;font-size:13.2px;color:#252423;font-weight:normal;font-style:normal;font-family:'Liberation Sans', sans-serif;letter-spacing:0.800px;">Major</div>
<div class="r" style="left:217px;top:674px;width:1263px;height:1px;background:#d2d0ce;"></div>
<div class="t" style="left:-65.00px;width:600px;text-align:center;top:680.68px;font-size:14.5px;color:#605e5c;font-weight:normal;font-style:normal;font-family:'Liberation Sans', sans-serif;">19</div>
<div class="t" style="left:411.60px;top:681.98px;font-size:13.2px;color:#252423;font-weight:normal;font-style:italic;font-family:'Liberation Sans', sans-serif;letter-spacing:0.582px;">11966</div>
<div class="t" style="left:458.70px;top:681.98px;font-size:13.2px;color:#252423;font-weight:normal;font-style:normal;font-family:'Liberation Sans', sans-serif;letter-spacing:-0.657px;">CHS-82</div>
<div class="t" style="left:813.60px;top:681.98px;font-size:13.2px;color:#252423;font-weight:normal;font-style:italic;font-family:'Liberation Sans', sans-serif;letter-spacing:0.351px;">10010</div>
<div class="t" style="left:861.00px;top:681.98px;font-size:13.2px;color:#252423;font-weight:normal;font-style:normal;font-family:'Liberation Sans', sans-serif;letter-spacing:0.000px;">Issue? strange going on windows 10 Pro NTOSKRNL.exe</div>
<div class="t" style="left:1307.00px;top:681.98px;font-size:13.2px;color:#252423;font-weight:normal;font-style:normal;font-family:'Liberation Sans', sans-serif;letter-spacing:0.800px;">Minor</div>
<div class="r" style="left:217px;top:701px;width:1263px;height:1px;background:#d2d0ce;"></div>
<div class="t" style="left:-65.00px;width:600px;text-align:center;top:707.05px;font-size:14.5px;color:#605e5c;font-weight:normal;font-style:normal;font-family:'Liberation Sans', sans-serif;">20</div>
<div class="t" style="left:411.60px;top:708.35px;font-size:13.2px;color:#252423;font-weight:normal;font-style:italic;font-family:'Liberation Sans', sans-serif;letter-spacing:0.599px;">11598</div>
<div class="t" style="left:458.70px;top:708.35px;font-size:13.2px;color:#252423;font-weight:normal;font-style:normal;font-family:'Liberation Sans', sans-serif;letter-spacing:-0.657px;">BOA-39</div>
<div class="t" style="left:813.60px;top:708.35px;font-size:13.2px;color:#252423;font-weight:normal;font-style:italic;font-family:'Liberation Sans', sans-serif;letter-spacing:0.599px;">10011</div>
<div class="t" style="left:861.00px;top:708.35px;font-size:13.2px;color:#252423;font-weight:normal;font-style:normal;font-family:'Liberation Sans', sans-serif;letter-spacing:0.230px;">IDE hdd with Windows 10 Rosewill 3.0</div>
<div class="t" style="left:1307.00px;top:708.35px;font-size:13.2px;color:#252423;font-weight:normal;font-style:normal;font-family:'Liberation Sans', sans-serif;letter-spacing:0.800px;">Major</div>
<div class="r" style="left:217px;top:727px;width:1263px;height:1px;background:#d2d0ce;"></div>
<div class="t" style="left:-65.00px;width:600px;text-align:center;top:733.43px;font-size:14.5px;color:#605e5c;font-weight:normal;font-style:normal;font-family:'Liberation Sans', sans-serif;">21</div>
<div class="t" style="left:411.60px;top:734.73px;font-size:13.2px;color:#252423;font-weight:normal;font-style:italic;font-family:'Liberation Sans', sans-serif;letter-spacing:0.599px;">11922</div>
<div class="t" style="left:458.70px;top:734.73px;font-size:13.2px;color:#252423;font-weight:normal;font-style:normal;font-family:'Liberation Sans', sans-serif;letter-spacing:-0.657px;">CHS-38</div>
<div class="t" style="left:813.60px;top:734.73px;font-size:13.2px;color:#252423;font-weight:normal;font-style:italic;font-family:'Liberation Sans', sans-serif;letter-spacing:0.351px;">10012</div>
<div class="t" style="left:861.00px;top:734.73px;font-size:13.2px;color:#252423;font-weight:normal;font-style:normal;font-family:'Liberation Sans', sans-serif;letter-spacing:0.161px;">Display Driver NVIDIA Win 10</div>
<div class="t" style="left:1307.00px;top:734.73px;font-size:13.2px;color:#252423;font-weight:normal;font-style:normal;font-family:'Liberation Sans', sans-serif;letter-spacing:0.800px;">Major</div>
<div class="r" style="left:217px;top:753px;width:1263px;height:1px;background:#d2d0ce;"></div>
<div class="t" style="left:-65.00px;width:600px;text-align:center;top:759.80px;font-size:14.5px;color:#605e5c;font-weight:normal;font-style:normal;font-family:'Liberation Sans', sans-serif;">22</div>
<div class="t" style="left:411.60px;top:761.10px;font-size:13.2px;color:#252423;font-weight:normal;font-style:italic;font-family:'Liberation Sans', sans-serif;letter-spacing:0.582px;">11605</div>
<div class="t" style="left:458.70px;top:761.10px;font-size:13.2px;color:#252423;font-weight:normal;font-style:normal;font-family:'Liberation Sans', sans-serif;letter-spacing:-0.657px;">BOA-46</div>
<div class="t" style="left:813.60px;top:761.10px;font-size:13.2px;color:#252423;font-weight:normal;font-style:italic;font-family:'Liberation Sans', sans-serif;letter-spacing:0.351px;">10012</div>
<div class="t" style="left:861.00px;top:761.10px;font-size:13.2px;color:#252423;font-weight:normal;font-style:normal;font-family:'Liberation Sans', sans-serif;letter-spacing:0.327px;">Games freezing, no internet connection on boot,</div>
<div class="t" style="left:1307.00px;top:761.10px;font-size:13.2px;color:#252423;font-weight:normal;font-style:normal;font-family:'Liberation Sans', sans-serif;letter-spacing:0.800px;">Minor</div>
<div class="r" style="left:217px;top:780px;width:1263px;height:1px;background:#d2d0ce;"></div>
<div class="t" style="left:-65.00px;width:600px;text-align:center;top:786.18px;font-size:14.5px;color:#605e5c;font-weight:normal;font-style:normal;font-family:'Liberation Sans', sans-serif;">23</div>
<div class="t" style="left:411.60px;top:787.48px;font-size:13.2px;color:#252423;font-weight:normal;font-style:italic;font-family:'Liberation Sans', sans-serif;letter-spacing:0.599px;">11583</div>
<div class="t" style="left:458.70px;top:787.48px;font-size:13.2px;color:#252423;font-weight:normal;font-style:normal;font-family:'Liberation Sans', sans-serif;letter-spacing:-0.657px;">BOA-24</div>
<div class="t" style="left:813.60px;top:787.48px;font-size:13.2px;color:#252423;font-weight:normal;font-style:italic;font-family:'Liberation Sans', sans-serif;letter-spacing:0.351px;">10012</div>
<div class="t" style="left:861.00px;top:787.48px;font-size:13.2px;color:#252423;font-weight:normal;font-style:normal;font-family:'Liberation Sans', sans-serif;letter-spacing:0.186px;">Desktop Not Powering On startup failures. BSOD</div>
<div class="t" style="left:1307.00px;top:787.48px;font-size:13.2px;color:#252423;font-weight:normal;font-style:normal;font-family:'Liberation Sans', sans-serif;letter-spacing:0.800px;">Major</div>
<div class="r" style="left:217px;top:806px;width:1263px;height:1px;background:#d2d0ce;"></div>
<div class="t" style="left:-65.00px;width:600px;text-align:center;top:812.55px;font-size:14.5px;color:#605e5c;font-weight:normal;font-style:normal;font-family:'Liberation Sans', sans-serif;">24</div>
<div class="t" style="left:411.60px;top:813.85px;font-size:13.2px;color:#252423;font-weight:normal;font-style:italic;font-family:'Liberation Sans', sans-serif;letter-spacing:0.599px;">11590</div>
<div class="t" style="left:458.70px;top:813.85px;font-size:13.2px;color:#252423;font-weight:normal;font-style:normal;font-family:'Liberation Sans', sans-serif;letter-spacing:-0.657px;">BOA-31</div>
<div class="t" style="left:813.60px;top:813.85px;font-size:13.2px;color:#252423;font-weight:normal;font-style:italic;font-family:'Liberation Sans', sans-serif;letter-spacing:0.599px;">10011</div>
<div class="t" style="left:861.00px;top:813.85px;font-size:13.2px;color:#252423;font-weight:normal;font-style:normal;font-family:'Liberation Sans', sans-serif;letter-spacing:-0.085px;">Update success. 3.0 USB Card causing</div>
<div class="t" style="left:1307.00px;top:813.85px;font-size:13.2px;color:#252423;font-weight:normal;font-style:normal;font-family:'Liberation Sans', sans-serif;letter-spacing:0.800px;">Major</div>
<div class="r" style="left:217px;top:832px;width:1263px;height:1px;background:#d2d0ce;"></div>
<div class="t" style="left:-65.00px;width:600px;text-align:center;top:838.93px;font-size:14.5px;color:#605e5c;font-weight:normal;font-style:normal;font-family:'Liberation Sans', sans-serif;">25</div>
<div class="t" style="left:411.60px;top:840.23px;font-size:13.2px;color:#252423;font-weight:normal;font-style:italic;font-family:'Liberation Sans', sans-serif;letter-spacing:0.582px;">11896</div>
<div class="t" style="left:458.70px;top:840.23px;font-size:13.2px;color:#252423;font-weight:normal;font-style:normal;font-family:'Liberation Sans', sans-serif;letter-spacing:-0.657px;">CHS-12</div>
<div class="t" style="left:813.60px;top:840.23px;font-size:13.2px;color:#252423;font-weight:normal;font-style:italic;font-family:'Liberation Sans', sans-serif;letter-spacing:0.351px;">10010</div>
<div class="t" style="left:861.00px;top:840.23px;font-size:13.2px;color:#252423;font-weight:normal;font-style:normal;font-family:'Liberation Sans', sans-serif;letter-spacing:0.160px;">Rosewill 3.0 USB port not load</div>
<div class="t" style="left:1307.00px;top:840.23px;font-size:13.2px;color:#252423;font-weight:normal;font-style:normal;font-family:'Liberation Sans', sans-serif;letter-spacing:0.800px;">Minor</div>
<div class="r" style="left:217px;top:859px;width:1263px;height:1px;background:#d2d0ce;"></div>
<div class="t" style="left:284.50px;top:177.40px;font-size:12.4px;color:#ffffff;font-weight:bold;font-style:normal;font-family:'Liberation Sans', sans-serif;letter-spacing:-0.140px;">ISSUE_ID</div>
<svg class="r" style="left:258px;top:172px;" width="22" height="20" viewBox="0 0 22 20"><g font-family="Liberation Sans" fill="#ffffff" stroke="#ffffff" stroke-width="0.25"><text x="-0.8" y="14.9" font-size="12.5">1</text><text x="5" y="10.7" font-size="12">2</text><text x="10.6" y="17.9" font-size="12.5">3</text></g></svg>
<div class="t" style="left:485.10px;top:177.40px;font-size:12.4px;color:#605e5c;font-weight:bold;font-style:normal;font-family:'Liberation Sans', sans-serif;letter-spacing:-0.491px;">ISSUE_KEY</div>
<svg class="r" style="left:457px;top:172px;" width="24" height="20" viewBox="0 0 24 20"><g font-family="Liberation Sans" fill="#605e5c" stroke="#605e5c" stroke-width="0.3"><text x="-0.3" y="14" font-size="11.2">A</text><text x="6.3" y="9.6" font-size="10.4">B</text><text x="10.6" y="17.9" font-size="11">C</text></g></svg>
<div class="t" style="left:686.20px;top:177.40px;font-size:12.4px;color:#605e5c;font-weight:bold;font-style:normal;font-family:'Liberation Sans', sans-serif;letter-spacing:-0.166px;">ISSUE_TYPE_ID</div>
<svg class="r" style="left:660px;top:172px;" width="22" height="20" viewBox="0 0 22 20"><g font-family="Liberation Sans" fill="#605e5c" stroke="#605e5c" stroke-width="0.25"><text x="-0.8" y="14.9" font-size="12.5">1</text><text x="5" y="10.7" font-size="12">2</text><text x="10.6" y="17.9" font-size="12.5">3</text></g></svg>
<div class="t" style="left:887.00px;top:177.40px;font-size:12.4px;color:#605e5c;font-weight:bold;font-style:normal;font-family:'Liberation Sans', sans-serif;letter-spacing:0.781px;">SUMMARY</div>
<svg class="r" style="left:859px;top:172px;" width="24" height="20" viewBox="0 0 24 20"><g font-family="Liberation Sans" fill="#605e5c" stroke="#605e5c" stroke-width="0.3"><text x="-0.3" y="14" font-size="11.2">A</text><text x="6.3" y="9.6" font-size="10.4">B</text><text x="10.6" y="17.9" font-size="11">C</text></g></svg>
<div class="t" style="left:1333.20px;top:177.40px;font-size:12.4px;color:#605e5c;font-weight:bold;font-style:normal;font-family:'Liberation Sans', sans-serif;letter-spacing:-0.241px;">PRIORITY</div>
<svg class="r" style="left:1305px;top:172px;" width="24" height="20" viewBox="0 0 24 20"><g font-family="Liberation Sans" fill="#605e5c" stroke="#605e5c" stroke-width="0.3"><text x="-0.3" y="14" font-size="11.2">A</text><text x="6.3" y="9.6" font-size="10.4">B</text><text x="10.6" y="17.9" font-size="11">C</text></g></svg>
<div class="r" style="left:431px;top:172px;width:20px;height:20px;background:#ffffff;border:1px solid #8a8886;box-sizing:border-box;"></div>
<svg class="r" style="left:437px;top:180px;" width="9" height="5" viewBox="0 0 9 5"><path d="M0 0H9L4.5 5Z" fill="#605e5c"/></svg>
<div class="r" style="left:632px;top:172px;width:20px;height:20px;background:#ffffff;border:1px solid #8a8886;box-sizing:border-box;"></div>
<svg class="r" style="left:638px;top:180px;" width="9" height="5" viewBox="0 0 9 5"><path d="M0 0H9L4.5 5Z" fill="#605e5c"/></svg>
<div class="r" style="left:833px;top:172px;width:20px;height:20px;background:#ffffff;border:1px solid #8a8886;box-sizing:border-box;"></div>
<svg class="r" style="left:839px;top:180px;" width="9" height="5" viewBox="0 0 9 5"><path d="M0 0H9L4.5 5Z" fill="#605e5c"/></svg>
<div class="r" style="left:1279px;top:172px;width:20px;height:20px;background:#ffffff;border:1px solid #8a8886;box-sizing:border-box;"></div>
<svg class="r" style="left:1285px;top:180px;" width="9" height="5" viewBox="0 0 9 5"><path d="M0 0H9L4.5 5Z" fill="#605e5c"/></svg>
<svg class="r" style="left:222px;top:173px;" width="28" height="18" viewBox="0 0 28 18"><rect x="1.5" y="1.5" width="15" height="14" fill="#fff" stroke="#605e5c"/><path d="M1 7.5H17M1 11.5H17M6.5 3V16M11.5 3V16" stroke="#8a8886" stroke-width="1"/><rect x="1.5" y="1.5" width="15" height="14" fill="none" stroke="#605e5c"/><rect x="1" y="1" width="16" height="2.8" fill="#4a7ebb"/><path d="M18 12.2H26L22 16Z" fill="#605e5c"/></svg>
<svg class="r" style="left:0px;top:8px;" width="40" height="42" viewBox="0 0 40 42"><rect x="3" y="2" width="31.5" height="38" fill="#fff"/><path d="M19 2.5H3.5V39.5H19" fill="none" stroke="#8a8886" stroke-width="1"/><rect x="6.2" y="5" width="6.6" height="2.7" fill="#737373"/><rect x="6.2" y="10" width="6.6" height="18" fill="#fdedb5"/><path d="M15 5H19V16.4H29V20.5L21 28H15Z" fill="#fdedb5"/><rect x="6.2" y="30.2" width="12.8" height="6.6" fill="#737373"/><path d="M22.5 3.5L32.5 13.5M32.5 3.5L22.5 13.5" stroke="#d13438" stroke-width="2.6"/><path d="M31.5 17V23" stroke="#8a8886" stroke-width="1"/><path d="M27.6 40V27" stroke="#4a7ebb" stroke-width="2.6"/><path d="M22.2 33.8L27.6 26.6L33 33.8" stroke="#4a7ebb" stroke-width="3.2" fill="none" stroke-linecap="butt"/></svg>
<svg class="r" style="left:66px;top:8px;" width="40" height="44" viewBox="0 0 40 44"><path d="M3.5 3.5H20.5L28.5 11.5V36.5H3.5Z" fill="#fff" stroke="#737373" stroke-width="1"/><path d="M20.5 3.5V11.5H28.5" fill="none" stroke="#737373" stroke-width="1"/><ellipse cx="28.5" cy="22" rx="7.5" ry="3" fill="#e8c170"/><rect x="21" y="22" width="15" height="16" fill="#e8c170"/><ellipse cx="28.5" cy="38" rx="7.5" ry="3" fill="#e8c170"/><path d="M21 23.5Q28.5 27 36 23.5" stroke="#fff" stroke-width="1" fill="none"/></svg>
<svg class="r" style="left:124px;top:10px;" width="40" height="40" viewBox="0 0 40 40"><path d="M2.5 2.5H19.5L27.5 10.5V35.5H2.5Z" fill="#fff" stroke="#737373" stroke-width="1"/><path d="M19.5 2.5V10.5H27.5" fill="none" stroke="#737373" stroke-width="1"/><circle cx="26.5" cy="29.7" r="8.5" fill="#fff" stroke="#4a7ebb" stroke-width="1.2"/><path d="M26.5 24V30H31" stroke="#605e5c" stroke-width="1.2" fill="none"/></svg>
<svg class="r" style="left:178px;top:12px;" width="36" height="34" viewBox="0 0 36 34"><rect x="1.5" y="2.5" width="33" height="29" fill="#fff" stroke="#8a8886"/><rect x="1" y="2" width="34" height="5.5" fill="#4a7ebb"/><path d="M1 13.5H35M1 19.5H35M1 25.5H35M12.5 7V31M23.5 7V31" stroke="#a19f9d" stroke-width="1"/><rect x="1.5" y="2.5" width="33" height="29" fill="none" stroke="#8a8886"/><rect x="1" y="2" width="34" height="5.5" fill="#4a7ebb"/></svg>
<svg class="r" style="left:256px;top:9px;" width="36" height="40" viewBox="0 0 36 40"><path d="M2.5 2.5H18.5L26.5 10.5V35.5H2.5Z" fill="#fff" stroke="#737373" stroke-width="1"/><path d="M18.5 2.5V10.5H26.5" fill="none" stroke="#737373" stroke-width="1"/><g transform="translate(22.9,28.9)"><circle r="10.5" fill="#f3f2f1" opacity="0"/><circle r="6.8" fill="#e8893a"/><g fill="#e8893a"><rect x="-10" y="-2.6" width="20" height="5.2"/><rect x="-10" y="-2.6" width="20" height="5.2" transform="rotate(60)"/><rect x="-10" y="-2.6" width="20" height="5.2" transform="rotate(-60)"/></g><circle r="3" fill="#fff"/></g></svg>
<svg class="r" style="left:346px;top:9px;" width="32" height="40" viewBox="0 0 32 40"><rect x="2.5" y="2.5" width="27" height="35" fill="#fff" stroke="#737373"/><path d="M5 6.5H11.5M5 16.5H11.5M5 26.5H11.5" stroke="#8a8886"/><rect x="15.3" y="6.3" width="10.2" height="6" fill="none" stroke="#4a7ebb" stroke-width="1.3"/><rect x="15.3" y="16.3" width="10.2" height="6" fill="none" stroke="#4a7ebb" stroke-width="1.3"/><rect x="15.3" y="26.3" width="10.2" height="6" fill="none" stroke="#4a7ebb" stroke-width="1.3"/></svg>
<svg class="r" style="left:429px;top:9px;" width="40" height="42" viewBox="0 0 40 42"><path d="M2.5 2.5H19.5L27.5 10.5V36.0H2.5Z" fill="#fff" stroke="#737373" stroke-width="1"/><path d="M19.5 2.5V10.5H27.5" fill="none" stroke="#737373" stroke-width="1"/><rect x="17" y="20" width="20" height="20" fill="#f3f2f1"/><path d="M19.5 28A7.5 7.5 0 0 1 33 25.5" stroke="#6aa697" stroke-width="2.6" fill="none"/><path d="M34.5 21V27.5H28Z" fill="#6aa697"/><path d="M34.5 33A7.5 7.5 0 0 1 21 35.5" stroke="#6aa697" stroke-width="2.6" fill="none"/><path d="M19.5 40V33.5H26Z" fill="#6aa697"/></svg>
<svg class="r" style="left:474px;top:6px;" width="26" height="24" viewBox="0 0 26 24"><path d="M4.5 4.5H11.2L15.5 8.8V19.5H4.5Z" fill="#fff" stroke="#737373"/><path d="M11 4.5V8.8H15.5" fill="none" stroke="#737373"/><circle cx="7.4" cy="11.5" r="1.3" fill="#8a8886"/><circle cx="7.4" cy="15.4" r="1.1" fill="none" stroke="#8a8886" stroke-width=".9"/><path d="M10 11.5H13M10 15.4H12" stroke="#8a8886" stroke-width=".9"/><rect x="12.5" y="12.5" width="10.5" height="9.5" fill="#fff" stroke="#737373"/><path d="M12 17.5H23M16 15V22M19.5 15V22" stroke="#8a8886" stroke-width=".9"/><rect x="12.5" y="12.5" width="10.5" height="9.5" fill="none" stroke="#737373"/><rect x="12" y="12" width="11.5" height="3" fill="#4a7ebb"/></svg>
<svg class="r" style="left:474px;top:34px;" width="26" height="24" viewBox="0 0 26 24"><path d="M6.5 2.5H14.5L19.5 7.5V18.5H6.5Z" fill="#fff" stroke="#737373"/><path d="M14.5 2.5V7.5H19.5" fill="none" stroke="#737373"/><rect x="13" y="12" width="10" height="9" fill="#f3f2f1"/><path d="M13.8 20.5V12.5H21.5V19.5" fill="#fff" stroke="#737373"/><path d="M21.5 12.5H24" stroke="#737373" stroke-width=".8"/><path d="M16 14.8H19.5M16 17H19.5" stroke="#8a8886" stroke-width=".9"/><rect x="13" y="19" width="8.5" height="2.2" fill="#737373"/></svg>
<svg class="r" style="left:478px;top:62px;" width="19" height="17" viewBox="0 0 19 17"><rect x="1.5" y="1.5" width="15" height="14" fill="#fff" stroke="#8a8886"/><rect x="1" y="1" width="16" height="2.5" fill="#4a7ebb"/><path d="M1 7.5H17M1 11.5H17M6.5 3V15M11.5 3V15" stroke="#8a8886" stroke-width=".9"/></svg>
<svg class="r" style="left:625px;top:11px;" width="38" height="35" viewBox="0 0 38 35"><rect x="2.5" y="2.5" width="33" height="30" fill="#fff" stroke="#737373"/><rect x="3" y="3" width="21" height="29" fill="#bdd0e6"/><path d="M2 8.5H36M2 14.5H36M2 20.5H36M2 26.5H36M13.5 2V33M24.5 2V33" stroke="#8a8886" stroke-width="1"/><rect x="2.5" y="2.5" width="33" height="30" fill="none" stroke="#737373"/></svg>
<svg class="r" style="left:694px;top:11px;" width="32" height="40" viewBox="0 0 32 40"><path d="M3.5 2V13.5H29.5V2" fill="#fff" stroke="#737373"/><rect x="10.5" y="2" width="11" height="17" fill="#fff"/><path d="M11.5 2H20.5V18L16 23L11.5 18Z" fill="#bdd0e6"/><path d="M5.5 36.5Q12 26 25 20.5M6 18.5Q16 24 25 37" stroke="#d9573b" stroke-width="2.8" fill="none" stroke-linecap="round"/></svg>
<svg class="r" style="left:758px;top:9px;" width="42" height="40" viewBox="0 0 42 40"><rect x="2" y="2" width="37" height="10.5" fill="#4a7ebb"/><rect x="2.5" y="16.5" width="36" height="20" fill="#fff" stroke="#737373"/><path d="M2 26.5H39M14.5 16V37M26.5 16V37" stroke="#737373"/><path d="M23.5 8.5L29.7 14.5L39.5 1.5" stroke="#f3f2f1" stroke-width="5" fill="none"/><path d="M23.5 8.5L29.7 14.5L39.5 1.5" stroke="#6aa697" stroke-width="2.6" fill="none"/></svg>
<svg class="r" style="left:809px;top:9px;" width="42" height="40" viewBox="0 0 42 40"><rect x="2" y="2" width="37" height="10.5" fill="#4a7ebb"/><rect x="2.5" y="16.5" width="36" height="20" fill="#fff" stroke="#737373"/><path d="M2 26.5H39M14.5 16V37M26.5 16V37" stroke="#737373"/><path d="M27 3L38.5 13.5M38.5 2L27 13.5" stroke="#f3f2f1" stroke-width="4" fill="none"/><path d="M26.5 2.5L38.5 13.5M38.5 1.5L26.5 14" stroke="#d9573b" stroke-width="2.2" fill="none"/></svg>
<svg class="r" style="left:871px;top:8px;" width="22" height="50" viewBox="0 0 22 50"><text x="2" y="11" font-family="Liberation Sans" font-size="11" fill="#4a7ebb">A</text><text x="2.5" y="20" font-family="Liberation Sans" font-size="10" fill="#8764b8">Z</text><path d="M16 2.5V19M12.5 15.5L16 19.5L19.5 15.5" stroke="#605e5c" stroke-width="1.1" fill="none"/><text x="2.5" y="36" font-family="Liberation Sans" font-size="10" fill="#8764b8">Z</text><text x="2" y="46" font-family="Liberation Sans" font-size="11" fill="#4a7ebb">A</text><path d="M16 29V45.5M12.5 42L16 46L19.5 42" stroke="#605e5c" stroke-width="1.1" fill="none"/></svg>
<svg class="r" style="left:915px;top:9px;" width="40" height="40" viewBox="0 0 40 40"><path d="M2.5 38V20.5H12.5M27.5 20.5H37.5V38" fill="#fff" stroke="#737373"/><rect x="3" y="21" width="9.5" height="17" fill="#fff"/><rect x="27.5" y="21" width="9.5" height="17" fill="#fff"/><rect x="12.5" y="6.5" width="4.5" height="31.5" fill="#bdd0e6" stroke="#a9b9cc" stroke-width="1"/><rect x="23" y="6.5" width="4.5" height="31.5" fill="#bdd0e6" stroke="#a9b9cc" stroke-width="1"/><path d="M16.8 2H23.2L20 5.2Z" fill="#4a7ebb"/></svg>
<svg class="r" style="left:970px;top:15px;" width="40" height="28" viewBox="0 0 40 28"><rect x="2.5" y="2.5" width="25" height="8" fill="#fff" stroke="#737373"/><rect x="12.5" y="17.5" width="25" height="8" fill="#fff" stroke="#737373"/><path d="M20 10.5L25 17.5" stroke="#737373"/></svg>
<svg class="r" style="left:1018px;top:36px;" width="20" height="18" viewBox="0 0 20 18"><rect x="1.5" y="1.5" width="16" height="15" fill="#fff" stroke="#8a8886"/><path d="M1 7.5H18M1 10.5H18M1 14H18M5.5 4V16M9.5 4V16M13.5 4V16" stroke="#b3b0ad" stroke-width="1"/><rect x="1.5" y="1.5" width="16" height="15" fill="none" stroke="#8a8886"/><rect x="2" y="2" width="15" height="2.6" fill="#4a7ebb"/><path d="M5.5 2V4.6M9.5 2V4.6M13.5 2V4.6" stroke="#fff" stroke-width=".8"/></svg>
<svg class="r" style="left:1017px;top:60px;" width="22" height="22" viewBox="0 0 22 22"><text x="1.5" y="9.8" font-family="Liberation Sans" font-size="10.5" fill="#484644">1</text><path d="M4.5 12Q4.5 16 9.5 16" stroke="#4a7ebb" stroke-width="1.5" fill="none"/><path d="M8 13L11 16L8 19" stroke="#4a7ebb" stroke-width="1.5" fill="none"/><text x="13.5" y="19.8" font-family="Liberation Sans" font-size="10.5" fill="#484644">2</text></svg>
<svg class="r" style="left:1219px;top:8px;" width="24" height="23" viewBox="0 0 24 23"><rect x="3.5" y="2.5" width="12" height="11" fill="#fff" stroke="#737373"/><path d="M3 8.5H16M7.5 4V14M11.5 4V14" stroke="#a19f9d" stroke-width="1"/><rect x="3" y="2" width="13" height="2.6" fill="#4a7ebb"/><rect x="8.5" y="8.5" width="12" height="11" fill="#fff" stroke="#737373"/><path d="M8 13.5H21M8 16.5H21M12.5 11V20M16.5 11V20" stroke="#a19f9d" stroke-width="1"/><rect x="8.5" y="8.5" width="12" height="11" fill="none" stroke="#737373"/><rect x="8" y="8" width="13" height="3" fill="#4a7ebb"/><path d="M2.8 16Q3.5 19.8 9 19.5" stroke="#4a7ebb" stroke-width="1.8" fill="none"/><path d="M7.5 16.8L10.5 19.5L7.5 22.2" stroke="#4a7ebb" stroke-width="1.6" fill="none"/></svg>
<svg class="r" style="left:1219px;top:34px;" width="24" height="22" viewBox="0 0 24 22"><rect x="4.5" y="2.5" width="15" height="4" fill="#fff" stroke="#737373"/><rect x="4" y="2" width="16" height="2" fill="#4a7ebb"/><path d="M9.5 4V6.5M14.5 4V6.5" stroke="#737373"/><rect x="4.5" y="16.5" width="15" height="3.5" fill="#fff" stroke="#737373"/><path d="M9.5 16.5V20M14.5 16.5V20" stroke="#737373"/><path d="M12.5 7.5V15.5" stroke="#4a7ebb" stroke-width="1" stroke-dasharray="1.5 1"/><path d="M10.5 10L12.5 8L14.5 10M10.5 13L12.5 15L14.5 13" stroke="#4a7ebb" stroke-width="1.1" fill="none"/></svg>
<svg class="r" style="left:1220px;top:60px;" width="22" height="22" viewBox="0 0 22 22"><rect x="2.5" y="2.5" width="17" height="17" fill="#eef3f9" stroke="#a9c0db"/><path d="M7.5 5V14M5 11.5L7.5 14L10 11.5M14.5 5V14M12 11.5L14.5 14L17 11.5M5 16.5H17" stroke="#9fb4cf" stroke-width="1" fill="none"/></svg>
<svg class="r" style="left:1368px;top:8px;" width="22" height="22" viewBox="0 0 22 22"><path d="M2 2.5H19M4 7.5H18M3 12.5H19M2 18.5H18" stroke="#8a8886" stroke-width="1.1"/></svg>
<svg class="r" style="left:1368px;top:38px;" width="24" height="15" viewBox="0 0 24 15"><path d="M2 7.5Q11.5 -1.5 21 7.5Q11.5 16.5 2 7.5Z" fill="#fff" stroke="#605e5c" stroke-width="1.6"/><circle cx="11.5" cy="7.5" r="3.3" fill="none" stroke="#605e5c" stroke-width="1.6"/><circle cx="11.5" cy="7.5" r="1.2" fill="#605e5c"/></svg>
<svg class="r" style="left:1368px;top:59px;" width="22" height="24" viewBox="0 0 22 24"><path d="M8 2.5H14M9 2.5V9L2.5 21.5H19.5L13 9V2.5" fill="#fff" stroke="#605e5c" stroke-width="1.6" stroke-linejoin="round"/><path d="M5.5 15.5H16.5" stroke="#605e5c" stroke-width="1"/></svg>
<div class="r" style="left:322px;top:89px;width:189px;height:83px;background:#fff;border:1px solid #c8c6c4;box-sizing:border-box;box-shadow:2px 2px 4px rgba(0,0,0,.38);"></div>
<div class="r" style="left:353px;top:90px;width:1px;height:51px;background:#e1dfdd;"></div>
<div class="r" style="left:327px;top:145px;width:180px;height:22px;background:#f3f2f1;"></div>
<div class="t" style="left:362.50px;top:97.98px;font-size:12.9px;color:#252423;font-weight:normal;font-style:normal;font-family:'Liberation Sans', sans-serif;letter-spacing:0.020px;">Manage Parameters</div>
<div class="t" style="left:362.50px;top:124.68px;font-size:12.9px;color:#8a8886;font-weight:normal;font-style:normal;font-family:'Liberation Sans', sans-serif;letter-spacing:-0.092px;">Edit Parameters</div>
<div class="t" style="left:362.50px;top:151.58px;font-size:12.9px;color:#252423;font-weight:normal;font-style:normal;font-family:'Liberation Sans', sans-serif;letter-spacing:-0.033px;">New Parameter</div>
<div class="r" style="left:315px;top:0px;width:96px;height:93px;border:3.2px solid #00b8a0;box-sizing:border-box;filter:drop-shadow(1.5px 2px 1.2px rgba(0,0,0,.7));"></div>
<div class="r" style="left:324px;top:141px;width:187px;height:30px;border:3.5px solid #00b8a0;box-sizing:border-box;filter:drop-shadow(1.5px 2px 1.2px rgba(0,0,0,.7));"></div>
<div class="r" style="left:398.7px;top:30.7px;width:23.6px;height:23.6px;border-radius:50%;background:#00b8a0;box-shadow:1px 2px 2px rgba(0,0,0,.45);"></div>
<svg class="r" style="left:400px;top:34px;" width="20" height="20" viewBox="0 0 20 20"><path d="M10.2 4.2H12.3V14.8H10.2V6.9L6.9 8.8V6.6Z" fill="#fff"/></svg>
<div class="r" style="left:504.09999999999997px;top:144.6px;width:23.6px;height:23.6px;border-radius:50%;background:#00b8a0;box-shadow:1px 2px 2px rgba(0,0,0,.45);"></div>
<div class="t" style="left:215.90px;width:600px;text-align:center;top:151.23px;font-size:14.5px;color:#ffffff;font-weight:bold;font-style:normal;font-family:'Liberation Sans', sans-serif;">2</div>
</body></html>
